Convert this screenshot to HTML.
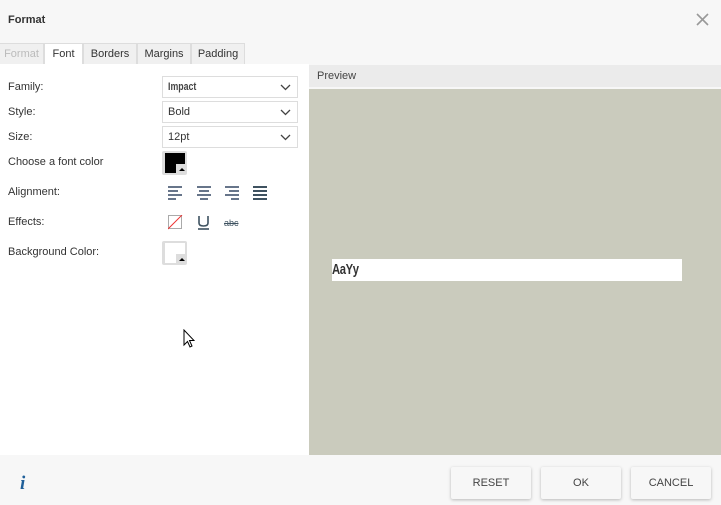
<!DOCTYPE html><html><head><style>
*{box-sizing:border-box;margin:0;padding:0}
body{width:721px;height:505px;overflow:hidden;background:#f7f7f7;font-family:"Liberation Sans",sans-serif;font-size:11px;color:#333;position:relative}
.a{position:absolute}
.tab{position:absolute;top:43px;height:22px;border:1px solid #ddd;border-bottom:none;background:#f0f0f0;line-height:21px;text-align:center;color:#333}
.lbl{position:absolute;left:8px;color:#333}
.sel{position:absolute;left:162px;width:136px;height:22px;border:1px solid #ddd;background:#fff;padding-left:5px;line-height:21px}
.sel svg{position:absolute;right:6px;top:7px}
.btn{position:absolute;top:467px;height:32px;background:#f7f7f7;box-shadow:0 1px 3px rgba(0,0,0,.25);text-align:center;line-height:32px;color:#444;border-radius:2px}
.bar{position:absolute;height:2px;background:#67758a}
.imp{display:inline-block;font-weight:bold;transform:scaleX(.8);transform-origin:left}
</style></head><body>
<div class="a" style="left:8px;top:14px;font-weight:bold;color:#333;font-size:11px">Format</div>
<svg class="a" style="left:696px;top:13px" width="13" height="13"><path d="M1 1L12 12M12 1L1 12" stroke="#999" stroke-width="1.6"/></svg>
<div class="tab" style="left:0;width:44px;color:#bbb;border-left:none">Format</div>
<div class="tab" style="left:44px;width:39px;background:#fff;height:23px">Font</div>
<div class="tab" style="left:83px;width:54px">Borders</div>
<div class="tab" style="left:137px;width:54px">Margins</div>
<div class="tab" style="left:191px;width:54px">Padding</div>
<div class="a" style="left:0;top:64px;width:309px;height:391px;background:#fff"></div>
<div class="a" style="left:309px;top:65px;width:412px;height:22px;background:#ebebeb;padding-left:8px;line-height:22px;color:#444">Preview</div>
<div class="a" style="left:309px;top:89px;width:412px;height:366px;background:#cacbbd"></div>
<div class="a" style="left:332px;top:259px;width:350px;height:22px;background:#fff"></div>
<div class="a" style="left:332px;top:261px;font-weight:bold;font-size:15px;color:#333;transform:scaleX(.75);transform-origin:left;letter-spacing:-0.5px">AaYy</div>
<div class="lbl" style="top:81px">Family:</div>
<div class="lbl" style="top:106px">Style:</div>
<div class="lbl" style="top:131px">Size:</div>
<div class="lbl" style="top:156px">Choose a font color</div>
<div class="lbl" style="top:186px">Alignment:</div>
<div class="lbl" style="top:216px">Effects:</div>
<div class="lbl" style="top:246px">Background Color:</div>
<div class="sel" style="top:76px;color:#444"><span class="imp">Impact</span><svg width="11" height="7"><path d="M1 1L5.5 5.5L10 1" fill="none" stroke="#444" stroke-width="1.3"/></svg></div>
<div class="sel" style="top:101px">Bold<svg width="11" height="7"><path d="M1 1L5.5 5.5L10 1" fill="none" stroke="#444" stroke-width="1.3"/></svg></div>
<div class="sel" style="top:126px">12pt<svg width="11" height="7"><path d="M1 1L5.5 5.5L10 1" fill="none" stroke="#444" stroke-width="1.3"/></svg></div>
<div class="a" style="left:162px;top:151px;width:25px;height:24px;background:#ddd;border-radius:2px"></div>
<div class="a" style="left:165px;top:153px;width:20px;height:20px;background:#000"></div>
<div class="a" style="left:176px;top:164px;width:9px;height:9px;background:#ddd"></div>
<div class="a" style="left:179px;top:168px;border:3px solid transparent;border-bottom:3px solid #000;border-top:none"></div>
<div class="a" style="left:162px;top:241px;width:25px;height:24px;background:#ddd;border-radius:2px"></div>
<div class="a" style="left:165px;top:243px;width:20px;height:20px;background:#fff"></div>
<div class="a" style="left:176px;top:254px;width:9px;height:9px;background:#ddd"></div>
<div class="a" style="left:179px;top:258px;border:3px solid transparent;border-bottom:3px solid #000;border-top:none"></div>
<div class="bar" style="left:168px;top:186px;width:14px"></div><div class="bar" style="left:168px;top:190px;width:10px"></div><div class="bar" style="left:168px;top:194px;width:14px"></div><div class="bar" style="left:168px;top:198px;width:8px"></div>
<div class="bar" style="left:197px;top:186px;width:14px"></div><div class="bar" style="left:199px;top:190px;width:10px"></div><div class="bar" style="left:197px;top:194px;width:14px"></div><div class="bar" style="left:200px;top:198px;width:8px"></div>
<div class="bar" style="left:225px;top:186px;width:14px"></div><div class="bar" style="left:229px;top:190px;width:10px"></div><div class="bar" style="left:225px;top:194px;width:14px"></div><div class="bar" style="left:231px;top:198px;width:8px"></div>
<div class="bar" style="left:253px;top:186px;width:14px;background:#3e5260"></div><div class="bar" style="left:253px;top:190px;width:14px;background:#3e5260"></div><div class="bar" style="left:253px;top:194px;width:14px;background:#3e5260"></div><div class="bar" style="left:253px;top:198px;width:14px;background:#3e5260"></div>
<svg class="a" style="left:168px;top:215px" width="15" height="15"><rect x=".5" y=".5" width="13" height="13" fill="none" stroke="#aaa"/><path d="M0 14L14 0" stroke="#e33" stroke-width="1"/></svg>
<svg class="a" style="left:197px;top:215px" width="13" height="15"><path d="M2 1V8Q2 11 6.5 11Q11 11 11 8V1" fill="none" stroke="#3e5260" stroke-width="1.6"/><path d="M1 14H12" stroke="#3e5260" stroke-width="1.6"/></svg>
<div class="a" style="left:224px;top:218px;font-size:9px;color:#3e5260;text-decoration:line-through">abc</div>
<svg class="a" style="left:183px;top:329px" width="12" height="20"><path d="M1 1V16L4.5 12.5L7 18L9 17L6.5 11.5H11Z" fill="#fff" stroke="#000" stroke-width="1"/></svg>
<div class="a" style="left:20px;top:473px;font-family:'Liberation Serif',serif;font-style:italic;font-weight:bold;font-size:19px;color:#1f5f99">i</div>
<div class="btn" style="left:451px;width:80px">RESET</div>
<div class="btn" style="left:541px;width:80px">OK</div>
<div class="btn" style="left:631px;width:80px">CANCEL</div>
</body></html>
